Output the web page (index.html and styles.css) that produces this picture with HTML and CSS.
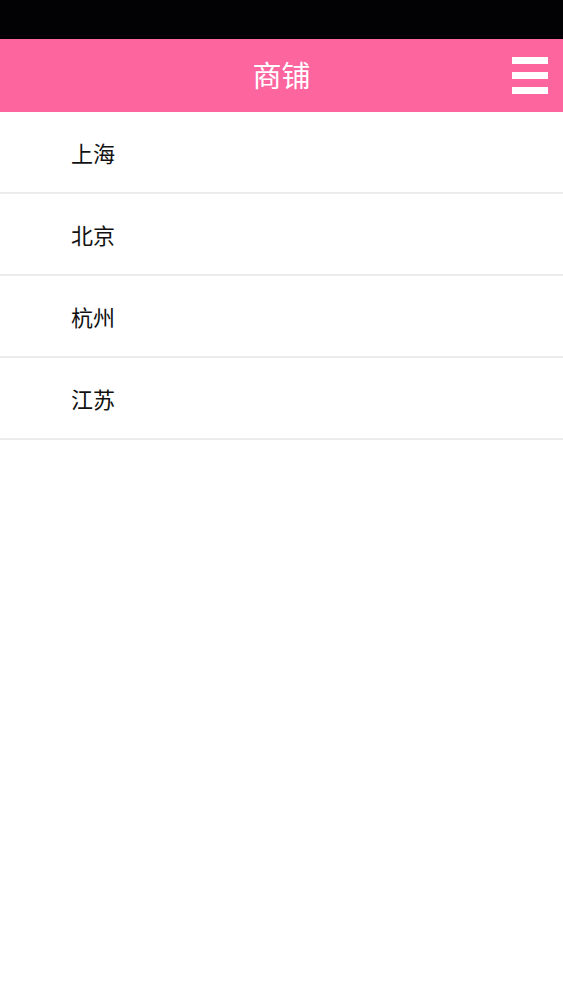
FILE: index.html
```html
<!DOCTYPE html>
<html lang="zh">
<head>
<meta charset="utf-8">
<link rel="stylesheet" href="styles.css">
</head>
<body>
<div class="status"></div>
<header class="bar">
  <h1 class="title">商铺</h1>
  <div class="menu"><span></span><span></span><span></span></div>
</header>
<ul class="list">
  <li class="item">上海</li>
  <li class="item">北京</li>
  <li class="item">杭州</li>
  <li class="item">江苏</li>
</ul>
</body>
</html>
```
FILE: styles.css
```css
html, body { margin: 0; padding: 0; background: #fff; }
body { font-family: "Noto Sans CJK SC", "Noto Sans", sans-serif; width: 563px; height: 1000px; }
.status { height: 39px; background: #020104; }
.bar { height: 73px; background: #fd659f; display: flex; align-items: center; justify-content: center; position: relative; }
.title { margin: 0; font-size: 29px; font-weight: 400; color: #fff; line-height: 1; padding-bottom: 2px; }
.menu { position: absolute; right: 15px; top: 18px; display: flex; flex-direction: column; gap: 8px; }
.menu span { display: block; width: 36px; height: 7px; background: #fff; }
.list { list-style: none; margin: 0; padding: 0; }
.item { height: 79px; padding-bottom: 1px; padding-left: 71px; border-bottom: 2px solid #ebebeb; display: flex; align-items: center; font-size: 22px; color: #111; }
```
